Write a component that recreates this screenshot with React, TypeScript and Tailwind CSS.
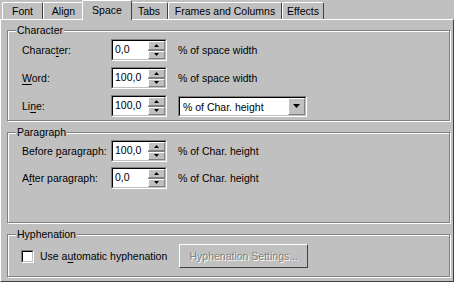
import type { ReactNode } from "react"

function Tab({ label, active, w }: { label: string; active?: boolean; w: string }) {
  if (active) {
    return (
      <div
        className={`${w} relative z-10 -mb-[1px] -mx-[2px] h-[20px] flex items-start justify-center pt-[3px] bg-[#c0c0c0] border-l border-t border-white border-r border-r-[#404040] rounded-t-[2px]`}
      >
        {label}
      </div>
    )
  }
  return (
    <div
      className={`${w} h-[17px] flex items-start justify-center pt-[2px] border-l border-t border-white border-r border-r-[#404040] rounded-t-[2px]`}
    >
      {label}
    </div>
  )
}

function Group({ title, className, children }: { title: string; className: string; children?: ReactNode }) {
  return (
    <div
      className={`relative border border-[#808080] shadow-[inset_1px_1px_0_#fff,1px_1px_0_#fff] ${className}`}
    >
      <span className="absolute -top-[8px] left-[8px] bg-[#c0c0c0] px-[1px] leading-[14px]">{title}</span>
      {children}
    </div>
  )
}

function Sunken({ className, children }: { className: string; children?: ReactNode }) {
  return (
    <div
      className={`border border-t-[#808080] border-l-[#808080] border-b-white border-r-white ${className}`}
    >
      <div className="h-full w-full border border-t-black border-l-black border-b-[#c0c0c0] border-r-[#c0c0c0] bg-white flex">
        {children}
      </div>
    </div>
  )
}

function SpinHalf({ up }: { up?: boolean }) {
  return (
    <div className="flex-1 flex items-center justify-center bg-[#c0c0c0] border border-t-white border-l-white border-b-[#808080] border-r-[#808080]">
      <svg width="5" height="3" viewBox="0 0 5 3">
        {up ? <path d="M2.5 0 L5 3 L0 3 Z" fill="#000" /> : <path d="M0 0 L5 0 L2.5 3 Z" fill="#000" />}
      </svg>
    </div>
  )
}

function Spin({ value }: { value: string }) {
  return (
    <Sunken className="w-[56px] h-[22px]">
      <div className="flex-1 pl-[2px] leading-[14px] pt-[1px]">{value}</div>
      <div className="w-[17px] flex flex-col bg-[#808080] gap-[1px]">
        <SpinHalf up />
        <SpinHalf />
      </div>
    </Sunken>
  )
}

function U({ children }: { children: ReactNode }) {
  return <span className="underline underline-offset-[2px]">{children}</span>
}

export default function App() {
  return (
    <div className="w-[454px] h-[282px] bg-[#c0c0c0] text-black text-[10.5px] leading-[13px] font-['Liberation_Sans',Arial,sans-serif] overflow-hidden">
      <div className="h-[19px] flex items-end pl-[2px]">
        <Tab label="Font" w="w-[41px]" />
        <Tab label="Align" w="w-[41px]" />
        <Tab label="Space" w="w-[50px]" active />
        <Tab label="Tabs" w="w-[38px]" />
        <Tab label="Frames and Columns" w="w-[114px]" />
        <Tab label="Effects" w="w-[42px]" />
      </div>
      <div className="h-[263px] border-t border-l border-white border-r border-r-[#404040] border-b border-b-[#404040] pl-[6px] pr-[3px] pt-[10px]">
        <Group title="Character" className="h-[91px] pl-[14px] pt-[8px]">
          <div className="flex flex-col gap-[6px]">
            <div className="flex items-center h-[22px]">
              <span className="w-[89px]">
                Charac<U>t</U>er:
              </span>
              <Spin value="0,0" />
              <span className="ml-[11px]">% of space width</span>
            </div>
            <div className="flex items-center h-[22px]">
              <span className="w-[89px]">
                <U>W</U>ord:
              </span>
              <Spin value="100,0" />
              <span className="ml-[11px]">% of space width</span>
            </div>
            <div className="flex items-center h-[22px]">
              <span className="w-[89px]">
                Li<U>n</U>e:
              </span>
              <Spin value="100,0" />
              <Sunken className="ml-[11px] w-[129px] h-[21px]">
                <div className="flex-1 pl-[3px] pt-[3px]">% of Char. height</div>
                <div className="w-[17px] flex items-center justify-center bg-[#c0c0c0] border border-t-white border-l-white border-b-[#808080] border-r-[#808080]">
                  <svg width="7" height="4" viewBox="0 0 7 4">
                    <path d="M0 0 L7 0 L3.5 4 Z" fill="#000" />
                  </svg>
                </div>
              </Sunken>
            </div>
          </div>
        </Group>
        <Group title="Paragraph" className="mt-[11px] h-[91px] pl-[14px] pt-[7px]">
          <div className="flex flex-col gap-[5px]">
            <div className="flex items-center h-[22px]">
              <span className="w-[89px]">
                Before <U>p</U>aragraph:
              </span>
              <Spin value="100,0" />
              <span className="ml-[11px]">% of Char. height</span>
            </div>
            <div className="flex items-center h-[22px]">
              <span className="w-[89px]">
                A<U>f</U>ter paragraph:
              </span>
              <Spin value="0,0" />
              <span className="ml-[11px]">% of Char. height</span>
            </div>
          </div>
        </Group>
        <Group title="Hyphenation" className="mt-[11px] h-[43px] pl-[13px] pt-[9px]">
          <div className="flex items-center h-[24px]">
            <div className="w-[13px] h-[13px] border border-t-[#808080] border-l-[#808080] border-b-white border-r-white">
              <div className="h-full w-full bg-white border border-t-black border-l-black border-b-[#c0c0c0] border-r-[#c0c0c0]" />
            </div>
            <span className="ml-[6px]">
              Use a<U>u</U>tomatic hyphenation
            </span>
            <div className="ml-[12px] w-[129px] h-[24px] flex items-center justify-center border border-t-white border-l-white border-b-[#404040] border-r-[#404040] text-[#808080] [text-shadow:1px_1px_0_#fff]">
              Hyphenation Settings...
            </div>
          </div>
        </Group>
      </div>
    </div>
  )
}
